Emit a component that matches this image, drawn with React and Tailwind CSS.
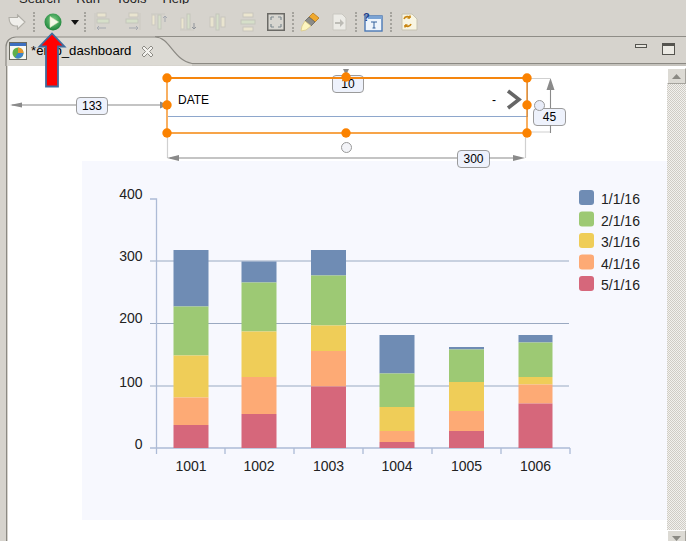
const colors = { blue: "#6f8cb4", green: "#9dc974", yellow: "#efcd58", orange: "#fdaa75", red: "#d6677b" }
const order = ["blue", "green", "yellow", "orange", "red"]

// y of every segment edge, top of blue down to the axis
const bars = [
  { label: "1001", x: 173.5, w: 35, ys: [250, 306.5, 355.5, 397.5, 425, 448] },
  { label: "1002", x: 241.5, w: 35, ys: [261.5, 282.5, 331.5, 377, 414, 448] },
  { label: "1003", x: 311, w: 35, ys: [250, 275.5, 325.5, 351, 386.5, 448] },
  { label: "1004", x: 379.5, w: 35, ys: [335, 373.5, 407, 431, 442, 448] },
  { label: "1005", x: 449, w: 35, ys: [347, 349.5, 382, 411, 431, 448] },
  { label: "1006", x: 518.5, w: 34, ys: [335, 342.5, 377, 384.5, 403.5, 448] },
]
const yLabels = [["400", 199, 194], ["300", 261, 256], ["200", 323.5, 318], ["100", 386, 381.5], ["0", 448, 444]]
const legend = ["1/1/16", "2/1/16", "3/1/16", "4/1/16", "5/1/16"]

function Sep({ className }) {
  return <div className={`w-[2px] h-[20px] border-l-2 border-dotted border-[#a5a39d] shrink-0 ${className}`}></div>
}

function AlignIcon({ className, flip = false }) {
  return (
    <svg className={`shrink-0 ${className}`} width="16" height="20" viewBox="0 0 16 20">
      <g transform={flip ? "translate(16 0) scale(-1 1)" : undefined}>
        <path d="M1 1V18" stroke="#cbc9c2" strokeWidth="1" />
        <rect x="3" y="1" width="9" height="4" fill="#e9e4cf" stroke="#c8c6be" />
        <rect x="3" y="7" width="12" height="4" fill="#d6dfc9" stroke="#c4c6bc" />
        <path d="M12 16H3M5 14L3 16L5 18" stroke="#a5a9b0" fill="none" />
      </g>
    </svg>
  )
}

function Toolbar() {
  return (
    <div className="h-[32px] pt-[4px] flex items-center shrink-0">
      <svg className="ml-[8px] shrink-0" width="18" height="16" viewBox="0 0 18 16">
        <path d="M1 3.5H9.5V0.8L17 8L9.5 15.2V12H7C3.5 12 1 8.5 1 3.5Z" fill="#f0efeb" stroke="#b0aea7" strokeWidth="1.1" />
      </svg>
      <Sep className="ml-[7px]" />
      <svg className="ml-[9px] shrink-0" width="18" height="18" viewBox="0 0 18 18">
        <defs>
          <radialGradient id="playfill" cx="50%" cy="40%" r="60%">
            <stop offset="0%" stopColor="#7fd08a" />
            <stop offset="100%" stopColor="#1c8338" />
          </radialGradient>
        </defs>
        <circle cx="9" cy="9" r="8.5" fill="url(#playfill)" />
        <path d="M6 3.5L14.5 9L6 14.5Z" fill="#f4f8e8" stroke="#d8e8b8" strokeWidth="0.6" />
      </svg>
      <svg className="ml-[9px] shrink-0" width="8" height="5" viewBox="0 0 8 5">
        <path d="M0 0H8L4 5Z" fill="#111" />
      </svg>
      <Sep className="ml-[5px]" />
      <AlignIcon className="ml-[8px]" />
      <AlignIcon className="ml-[15px]" flip />
      <svg className="ml-[10px] shrink-0" width="18" height="20" viewBox="0 0 18 20">
        <path d="M0 2H14" stroke="#cbc9c2" />
        <rect x="1" y="3" width="3" height="10" fill="#ece6cf" stroke="#cbc9c2" />
        <rect x="7" y="3" width="3" height="14" fill="#d6dfc9" stroke="#c4c6bc" />
        <path d="M14 10V4M12 6L14 4L16 6" stroke="#a5a9b0" fill="none" />
      </svg>
      <svg className="ml-[11px] shrink-0" width="18" height="20" viewBox="0 0 18 20">
        <path d="M0 18H14" stroke="#cbc9c2" />
        <rect x="1" y="6" width="3" height="11" fill="#ece6cf" stroke="#cbc9c2" />
        <rect x="7" y="2" width="3" height="15" fill="#d6dfc9" stroke="#c4c6bc" />
        <path d="M14 11V17M12 15L14 17L16 15" stroke="#8f939a" fill="none" />
      </svg>
      <svg className="ml-[11px] shrink-0" width="18" height="20" viewBox="0 0 18 20">
        <rect x="1" y="5" width="4" height="10" fill="#e9e4cf" stroke="#c8c6be" />
        <rect x="7" y="2" width="3" height="16" fill="#d6dfc9" stroke="#c4c6bc" />
        <rect x="12" y="5" width="4" height="10" fill="#e9e4cf" stroke="#c8c6be" />
      </svg>
      <svg className="ml-[13px] shrink-0" width="16" height="20" viewBox="0 0 16 20">
        <rect x="3" y="1" width="10" height="4" fill="#ece6cf" stroke="#c8c6be" />
        <rect x="1" y="8" width="14" height="4" fill="#d6dfc9" stroke="#c4c6bc" />
        <rect x="3" y="15" width="10" height="4" fill="#ece6cf" stroke="#c8c6be" />
      </svg>
      <svg className="ml-[11px] shrink-0" width="18" height="18" viewBox="0 0 18 18">
        <rect x="0.75" y="0.75" width="16.5" height="16.5" fill="#d8d6d0" stroke="#6b6a66" strokeWidth="1.5" />
        <path d="M4 4L7 4M4 4L4 7M14 4H11M14 4V7M4 14H7M4 14V11M14 14H11M14 14V11" stroke="#7f8a90" strokeWidth="1.2" />
      </svg>
      <Sep className="ml-[7px]" />
      <svg className="ml-[6px] shrink-0" width="20" height="20" viewBox="0 0 20 20">
        <path d="M13 1L19 6L15 10L9 5Z" fill="#f0a92e" stroke="#b97a1c" strokeWidth="0.8" />
        <path d="M9 5L15 10L11 14L5 9Z" fill="#8b8b88" stroke="#66665f" strokeWidth="0.8" />
        <path d="M5 9L11 14L6 18L1 19L2 14Z" fill="#fdf5bf" stroke="#d9c988" strokeWidth="0.8" />
      </svg>
      <svg className="ml-[12px] shrink-0" width="16" height="18" viewBox="0 0 16 18">
        <path d="M1 1H10L14 5V17H1Z" fill="#ecebe6" stroke="#c9c7c0" />
        <path d="M3 9H8V6L12 10L8 14V11H3Z" fill="#bdbcb6" />
      </svg>
      <Sep className="ml-[7px]" />
      <svg className="ml-[6px] shrink-0" width="20" height="20" viewBox="0 0 20 20">
        <rect x="2" y="4" width="17" height="15" fill="#eef4fb" stroke="#4a78b5" strokeWidth="1.4" />
        <rect x="5" y="4" width="14" height="3" fill="#7ba3d4" />
        <text x="0" y="9" fontSize="11" fontWeight="700" fill="#1c3f8c" fontFamily="Liberation Sans, sans-serif">?</text>
        <path d="M8 10H14M11 10V16M9.5 16H12.5" stroke="#33609c" strokeWidth="1" fill="none" />
      </svg>
      <Sep className="ml-[7px]" />
      <svg className="ml-[8px] shrink-0" width="18" height="18" viewBox="0 0 18 18">
        <path d="M2 1H12L17 6V17H2Z" fill="#f8f5e2" stroke="#c5c2b2" />
        <path d="M4 6C5 3 9 3 10 5M10 5V2.5M10 5H7.5" stroke="#c98612" strokeWidth="1.6" fill="none" />
        <path d="M11 11C10 14 6 14 5 12M5 12V14.5M5 12H7.5" stroke="#c98612" strokeWidth="1.6" fill="none" />
      </svg>
    </div>
  )
}

function TabStrip() {
  return (
    <div className="h-[30px] relative shrink-0 flex items-center">
      <svg className="absolute left-0 top-0" width="686" height="30" viewBox="0 36 686 30">
        <path d="M6 66V47C6 41 10 37 16 37H155C170 37 173 60 192 63.5H686" fill="#dcdad4" stroke="#8b8983" strokeWidth="1.2" />
        <path d="M155 36.5H686" stroke="#8f8d87" strokeWidth="1" />
        <path d="M192 65H686" stroke="#b4b2ac" strokeWidth="1" />
      </svg>
      <svg className="relative ml-[9px] shrink-0" width="18" height="18" viewBox="0 0 18 18">
        <rect x="0.5" y="0.5" width="17" height="17" fill="#f8f8f4" stroke="#6a6a60" />
        <rect x="1" y="1" width="16" height="3" fill="#3d6fc0" />
        <circle cx="9" cy="11" r="5.5" fill="#5fb04a" />
        <path d="M9 11V5.5A5.5 5.5 0 0 1 14.5 11Z" fill="#e8952c" />
        <path d="M9 11H14.5A5.5 5.5 0 0 1 6 15.6Z" fill="#3f83c9" />
      </svg>
      <span className="relative ml-[4px] w-[106px] text-[13.2px] text-black whitespace-nowrap">*emp_dashboard</span>
      <svg className="relative ml-[4px] shrink-0" width="13" height="13" viewBox="0 0 13 13">
        <path d="M1 3L3 1L6.5 4.5L10 1L12 3L8.5 6.5L12 10L10 12L6.5 8.5L3 12L1 10L4.5 6.5Z" fill="#f4f3ef" stroke="#8d8c86" strokeWidth="1" />
      </svg>
      <div className="relative ml-auto mr-[11px] flex items-center gap-[15px] -mt-[5px]">
        <div className="w-[12px] h-[4px] border border-[#55544f] bg-[#e6e4de] -mt-[6px]"></div>
        <div className="w-[13px] h-[12px] border border-[#55544f] border-t-[3px] bg-[#eceae4]"></div>
      </div>
    </div>
  )
}

function ChartPanel() {
  return (
    <div className="ml-[74px] mt-[95px] w-[585px] h-[359px] bg-[#f7f8fe]">
      <svg width="585" height="359" viewBox="82 161 585 359" fontFamily="Liberation Sans, Arial, sans-serif" fontSize="14" fill="#222">
        {[261, 323.5, 386].map((y) => (
          <path key={y} d={`M150 ${y}H569`} stroke="#9aa9c1" strokeWidth="1.2" />
        ))}
        <path d="M150 199H156.5V454M150 448H570M225 448V454M294 448V454M363 448V454M432 448V454M501 448V454M570 448V454" stroke="#adbbd6" strokeWidth="1.3" fill="none" />
        {bars.map((b) =>
          order.map((c, i) => (
            <rect key={b.label + c} x={b.x} y={b.ys[i]} width={b.w} height={b.ys[i + 1] - b.ys[i]} fill={colors[c]} />
          ))
        )}
        {yLabels.map(([t, , y]) => (
          <text key={t} x="142.5" y={y + 5} textAnchor="end">{t}</text>
        ))}
        {bars.map((b) => (
          <text key={b.label} x={b.x + b.w / 2} y="471" textAnchor="middle">{b.label}</text>
        ))}
        {legend.map((t, i) => (
          <g key={t}>
            <rect x="579" y={190 + i * 21.5} width="15" height="15" rx="3" fill={colors[order[i]]} />
            <text x="601" y={204 + i * 21.5}>{t}</text>
          </g>
        ))}
      </svg>
    </div>
  )
}

function DimBadge({ className, children }) {
  return (
    <div className={`absolute h-[18px] flex items-center justify-center bg-[#eef2fc] border-[1.5px] border-[#9b9b9b] rounded-[4px] text-[12px] text-black leading-none ${className}`}>
      {children}
    </div>
  )
}

function DesignOverlay() {
  const handles = [[167, 78], [346, 77], [527, 78], [167, 105], [527, 105], [167, 133], [346, 133], [527, 133]]
  return (
    <>
      <div className="absolute left-[160px] top-[13px] w-[360px] h-[38px] border-r border-b border-[#8ea7cc] flex items-center pl-[10px] pt-[4px] text-[12px] text-black">
        <span>DATE</span>
        <span className="ml-auto mr-[31px]">-</span>
      </div>
      <DimBadge className="left-[68px] top-[31px] w-[32px]">133</DimBadge>
      <DimBadge className="left-[324px] top-[9px] w-[32px]">10</DimBadge>
      <DimBadge className="left-[525px] top-[42px] w-[33px]">45</DimBadge>
      <DimBadge className="left-[449px] top-[84px] w-[33px]">300</DimBadge>
      <svg className="absolute left-0 top-0 pointer-events-none" width="659" height="110" viewBox="8 66 659 110">
        <path d="M508 91L519 99.5L508 108" stroke="#666" strokeWidth="3.6" fill="none" />
        {/* extension lines */}
        <path d="M527 78.5H550M527 132H550M167.5 133V158M525.5 133V158" stroke="#d0d0d0" strokeWidth="1.2" fill="none" />
        {/* dimension lines */}
        <path d="M12 105H76M107 105H162M550.5 84V108M550.5 125V133M170 158H457M489 158H520" stroke="#8a8a8a" strokeWidth="1.1" fill="none" />
        <path d="M10 105L22 102.5V107.5ZM168 105L160 101.5V108.5ZM550.5 78L546.5 90H554.5ZM167 158L179 155V161ZM525 158L513 155V161ZM346 75L343 69H349Z" fill="#8a8a8a" />
        {/* selection */}
        <path d="M167 78H527" stroke="#f5860e" strokeWidth="1.8" fill="none" />
        <path d="M167 78V133H527V78" stroke="#f5860e" strokeWidth="1.3" fill="none" />
        {handles.map(([x, y]) => (
          <circle key={`${x}-${y}`} cx={x} cy={y} r="4.7" fill="#fb8200" />
        ))}
        <circle cx="539.5" cy="105.5" r="5" fill="#e8ecf8" stroke="#999" />
        <circle cx="346.5" cy="147.5" r="5" fill="#f3f4f8" stroke="#999" />
      </svg>
    </>
  )
}

function ScrollBar() {
  return (
    <div className="w-[19px] shrink-0 bg-white pt-[2px]">
      <div className="h-[16px] bg-[#dcdad4] border border-t-white border-l-white border-r-[#a5a39d] border-b-[#a5a39d] flex items-center justify-center">
        <svg width="9" height="5" viewBox="0 0 9 5"><path d="M4.5 0L9 5H0Z" fill="#8a8983" /></svg>
      </div>
      <div className="h-[446px] bg-[repeating-conic-gradient(#cfccc5_0_25%,#f2f1ee_0_50%)] bg-[length:2px_2px]"></div>
      <div className="h-[17px] bg-[#dcdad4] border border-t-white border-l-white border-r-[#a5a39d] border-b-[#a5a39d] flex items-center justify-center">
        <svg width="9" height="5" viewBox="0 0 9 5"><path d="M0 0H9L4.5 5Z" fill="#8a8983" /></svg>
      </div>
    </div>
  )
}

export default function App() {
  return (
    <div className="relative w-[686px] h-[541px] overflow-hidden bg-[#d6d3cd] flex flex-col font-['Liberation_Sans',Arial,sans-serif]">
      <div className="h-[4px] overflow-hidden shrink-0">
        <div className="-mt-[9px] pl-[19px] flex text-[13px] leading-[15px] text-[#222] gap-[16px]">
          <span>Search</span>
          <span>Run</span>
          <span>Tools</span>
          <span>Help</span>
        </div>
      </div>
      <Toolbar />
      <TabStrip />
      <div className="flex flex-1 pl-[8px] min-h-0">
        <div className="relative flex-1 bg-white overflow-hidden">
          <ChartPanel />
          <DesignOverlay />
        </div>
        <ScrollBar />
      </div>
      <div className="absolute left-[6px] top-[66px] w-[1px] h-[475px] bg-[#8b8983]"></div>
      {/* red callout arrow pasted over the screenshot */}
      <svg className="absolute left-[36px] top-[30px]" width="32" height="60" viewBox="36 30 32 60">
        <path d="M52 33.5L39.5 46.5H46V86.5H58V46.5H64.5Z" fill="#ff0000" stroke="#3e6d9e" strokeWidth="1.8" />
      </svg>
    </div>
  )
}
